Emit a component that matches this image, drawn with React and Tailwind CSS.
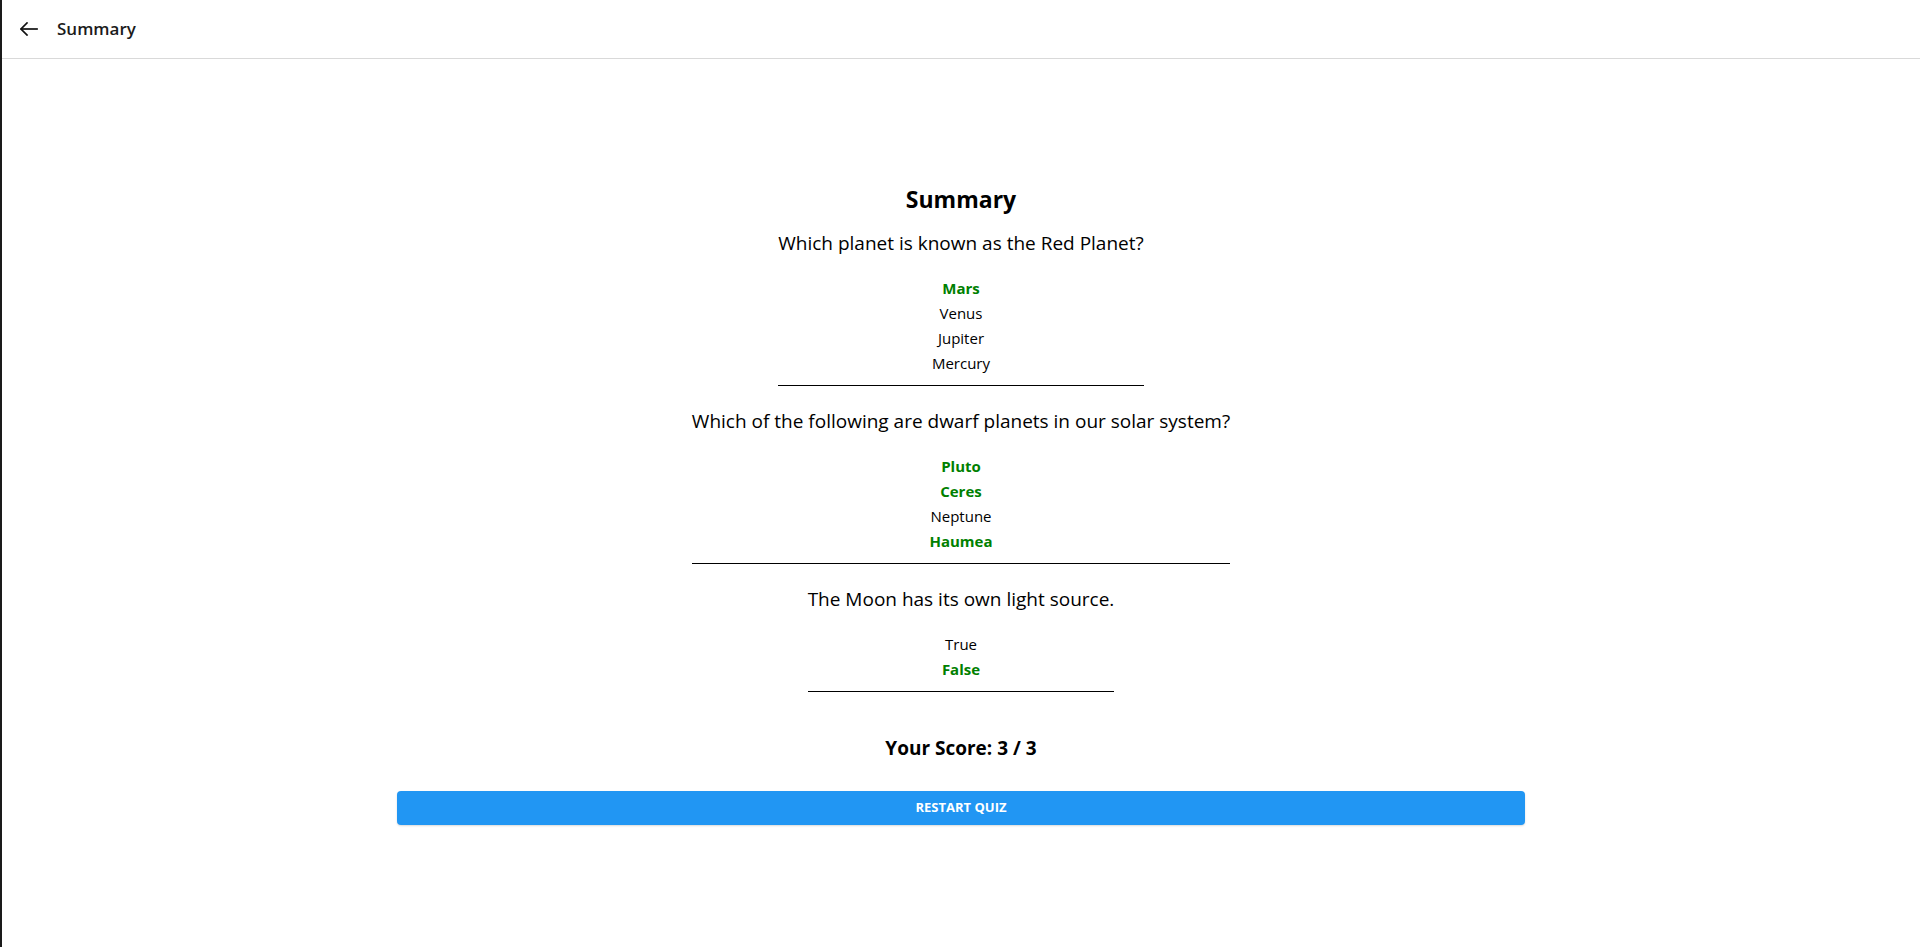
import React from "react";

const questions = [
  {
    q: "Which planet is known as the Red Planet?",
    options: [
      { t: "Mars", ok: true },
      { t: "Venus" },
      { t: "Jupiter" },
      { t: "Mercury" },
    ],
  },
  {
    q: "Which of the following are dwarf planets in our solar system?",
    options: [
      { t: "Pluto", ok: true },
      { t: "Ceres", ok: true },
      { t: "Neptune" },
      { t: "Haumea", ok: true },
    ],
  },
  {
    q: "The Moon has its own light source.",
    options: [{ t: "True" }, { t: "False", ok: true }],
  },
];

export default function App() {
  return (
    <div
      className="min-h-[947px] bg-white border-l-2 border-[#1a1a1a] text-black"
      style={{ fontFamily: '"Open Sans", "Noto Sans", sans-serif' }}
    >
      <header className="h-[59px] flex items-center border-b border-[#d9d9d9]">
        <button className="w-[50px] h-[50px] ml-[2px] flex items-center justify-center">
          <svg width="18" height="14" viewBox="0 0 18 14" fill="none" stroke="#111" strokeWidth="1.7" strokeLinecap="square">
            <path d="M7 1L1 7l6 6" />
            <path d="M1.5 7H17" />
          </svg>
        </button>
        <h1 className="ml-[3px] text-[17px] font-semibold text-[#1b1b1b]">Summary</h1>
      </header>

      <main className="flex flex-col items-center pt-[124px]">
        <h2 className="text-[23px] leading-[32px] font-bold">Summary</h2>
        <div className="flex flex-col items-center mt-[14px]">
          {questions.map((item, i) => (
            <div
              key={i}
              className={`inline-flex flex-col items-center border-b border-black pb-[9px] ${i > 0 ? "mt-[21px]" : ""}`}
            >
              <p className="text-[19px] leading-[28px]">{item.q}</p>
              <ul className="mt-[19px] flex flex-col items-center">
                {item.options.map((o) => (
                  <li
                    key={o.t}
                    className={`text-[15px] leading-[25px] ${o.ok ? "font-bold text-[#008000]" : "text-black"}`}
                  >
                    {o.t}
                  </li>
                ))}
              </ul>
            </div>
          ))}
        </div>
        <p className="mt-[42px] text-[19px] leading-[28px] font-bold">Your Score: 3 / 3</p>
        <button className="mt-[29px] w-[1128px] h-[34px] rounded-[4px] bg-[#2196F3] text-white text-[13px] font-bold uppercase shadow-[0_1px_2px_rgba(0,0,0,0.15)]">
          Restart Quiz
        </button>
      </main>
    </div>
  );
}
